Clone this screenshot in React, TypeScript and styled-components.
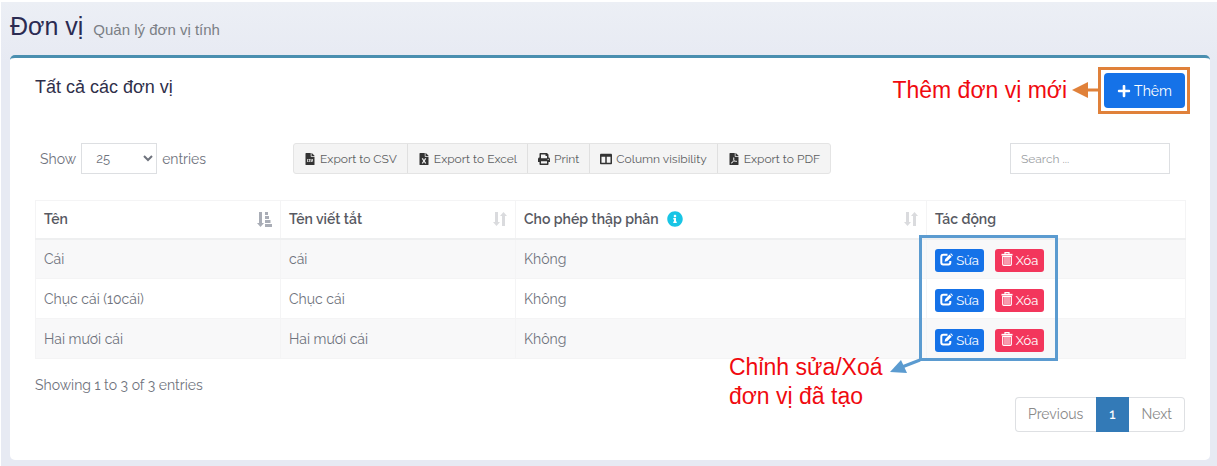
import React from "react";
import styled, { createGlobalStyle } from "styled-components";
import {
  FaColumns,
  FaFileCsv,
  FaFileExcel,
  FaFilePdf,
  FaInfoCircle,
  FaPlus,
  FaPrint,
} from "react-icons/fa";

const uiFont = `Raleway, Lato, "Noto Sans", sans-serif`;
const headingFont = `"Liberation Sans", Arial, sans-serif`;

const GlobalStyle = createGlobalStyle`
  * { box-sizing: border-box; }
  body {
    margin: 0;
    background: #e8ebf3;
    color: #6f737d;
    font: 400 14px/20px ${uiFont};
  }
  button, input, select { font-family: inherit; color: inherit; }
`;

const Page = styled.main`
  padding: 11px 7px 6px 9px;
  border-top: 2px solid #fff;
  border-left: 1px solid #fff;
  background: linear-gradient(#eceff5, #e7eaf3 60px);
`;

const PageHeader = styled.h1`
  display: flex;
  align-items: baseline;
  gap: 10px;
  margin: 0 0 12px;
  color: #2b2b52;
  font: 400 25px/26px ${headingFont};
`;

const Subtitle = styled.small`
  color: #7b7f85;
  font-size: 15px;
`;

const Card = styled.section`
  padding: 15px 25px 28px;
  border-top: 3px solid #4a8fb0;
  border-radius: 5px;
  background: #fff;
`;

const CardHeader = styled.header`
  display: flex;
  justify-content: space-between;
  align-items: flex-start;
`;

const CardTitle = styled.h2`
  margin: 4px 0 0;
  color: #2f2f4a;
  font: 400 18px/20px ${headingFont};
`;

const AddArea = styled.div`
  position: relative;
`;

const AddButton = styled.button`
  display: flex;
  align-items: center;
  justify-content: center;
  gap: 3px;
  width: 81px;
  height: 35px;
  padding: 0;
  border: 0;
  border-radius: 4px;
  background: #1572e8;
  color: #fff;
  font-size: 14px;
`;

const AddFrame = styled.div`
  position: absolute;
  inset: -6px -5px -6px -6px;
  border: 3px solid #e0813a;
  pointer-events: none;
`;

const AddNote = styled.div`
  position: absolute;
  right: 85px;
  top: 3px;
  display: flex;
  align-items: center;
  gap: 5px;
  color: #f00a10;
  font: 400 23px/28px ${headingFont};
  white-space: nowrap;
`;

const Tools = styled.div`
  display: grid;
  grid-template-columns: 2fr 7fr 3fr;
  align-items: center;
  margin: 35px 0 26px;
`;

const LengthLabel = styled.label`
  display: flex;
  align-items: center;
  gap: 5px;
  padding-left: 5px;
`;

const LengthSelect = styled.select`
  width: 76px;
  height: 31px;
  padding: 4px 0 4px 10px;
  border: 1px solid #dddfe2;
  background: #fff;
  font-size: 13px;
`;

const ExportGroup = styled.div`
  display: flex;
  justify-self: center;
  border: 1px solid #e4e4e4;
  border-radius: 3px;
  background: #f4f4f4;
`;

const ExportButton = styled.button`
  display: flex;
  align-items: center;
  gap: 4px;
  height: 29px;
  padding: 0 10px;
  border: 0;
  background: none;
  color: #5d5f62;
  font-size: 12px;
  white-space: nowrap;

  & + & { border-left: 1px solid #e0e0e0; }
  svg { color: #333; }
`;

const SearchInput = styled.input`
  justify-self: end;
  width: 160px;
  height: 31px;
  margin-right: 15px;
  padding: 0 10px;
  border: 1px solid #dddfe2;
  font-size: 12px;

  &::placeholder { color: #9b9ea3; }
`;

const Table = styled.table`
  width: 100%;
  table-layout: fixed;
  border-collapse: collapse;
`;

const Col = styled.col<{ $width: number }>`
  width: ${(p) => p.$width}px;
`;

const Row = styled.tr`
  height: 40px;
  &:nth-child(odd) { background: #f8f8f9; }
`;

const Cell = styled.td`
  padding: 0 8px;
  border: 1px solid #f4f4f5;
`;

const HeadCell = styled.th`
  height: 38px;
  padding: 0 8px;
  border: 1px solid #f4f4f5;
  border-bottom: 2px solid #eeeff0;
  color: #575962;
  font-weight: 600;
  text-align: left;
`;

const HeadContent = styled.div`
  display: flex;
  align-items: center;
  gap: 8px;
`;

const SortIcon = styled.svg<{ $active?: boolean }>`
  margin-left: auto;
  color: ${(p) => (p.$active ? "#a9adb6" : "#dadbde")};
`;

const Actions = styled.div`
  position: relative;
  display: flex;
  gap: 11px;
  padding-top: 3px;
`;

const ActionButton = styled.button<{ $danger?: boolean }>`
  display: flex;
  align-items: center;
  justify-content: center;
  gap: 3px;
  width: 49px;
  height: 23px;
  padding: 0;
  border: 0;
  border-radius: 3px;
  background: ${(p) => (p.$danger ? "#f3365c" : "#1572e8")};
  color: #fff;
  font-size: 13px;

  svg { margin-bottom: 2px; }
`;

const ActionsFrame = styled.div`
  position: absolute;
  left: -16px;
  top: -11px;
  width: 139px;
  height: 126px;
  border: 3px solid #5b9bd0;
  pointer-events: none;
`;

const ActionsNote = styled.p`
  position: absolute;
  right: 100%;
  top: 107px;
  margin: 0 32px 0 0;
  width: 174px;
  color: #f00a10;
  font: 400 23px/29px ${headingFont};
  white-space: nowrap;
`;

const NoteArrow = styled.svg`
  position: absolute;
  left: -45px;
  top: 110px;
`;

const Footer = styled.footer`
  display: flex;
  justify-content: space-between;
  align-items: flex-start;
  padding-top: 16px;
`;

const Pagination = styled.nav`
  display: flex;
  margin-top: 22px;
  border-radius: 4px;
  box-shadow: inset 0 0 0 1px #dee0e3;
`;

const PageLink = styled.a<{ $current?: boolean }>`
  padding: 7px 13px 8px;
  background: ${(p) => (p.$current ? "#337ab7" : "none")};
  color: ${(p) => (p.$current ? "#fff" : "#8a8a8a")};
  font-weight: ${(p) => (p.$current ? 500 : 400)};
  text-decoration: none;
`;

const SortBoth = () => (
  <SortIcon width="14" height="14" viewBox="0 0 14 14" fill="currentColor" aria-hidden="true">
    <path d="M2 0h3v10h2L3.500 14 0 10h2z" />
    <path d="M9 14V4H7l3.500-4L14 4h-2v10z" />
  </SortIcon>
);

const SortAscending = () => (
  <SortIcon $active width="15" height="15" viewBox="0 0 15 15" fill="currentColor" aria-hidden="true">
    <path d="M2 0h3v11h2l-3.500 4L0 11h2z" />
    <path d="M8 0h3v3H8zM8 4h4v3H8zM8 8h5.500v3H8zM8 12h7v3H8z" />
  </SortIcon>
);

const EditIcon = () => (
  <svg width="13" height="13" viewBox="0 0 13 13" aria-hidden="true">
    <path
      d="M7.500 1.800H3.200Q1.300 1.800 1.300 3.700V9.600Q1.300 11.500 3.200 11.500H8.400Q10.300 11.500 10.300 9.600V8"
      fill="none"
      stroke="currentColor"
      strokeWidth="2"
    />
    <path d="M4.600 8.700 5.200 6 9.600 1.600 11.700 3.700 7.300 8.100zM10.200 1 11 .2 13 2.200 12.300 3z" fill="currentColor" />
  </svg>
);

const TrashIcon = () => (
  <svg width="12" height="14" viewBox="0 0 12 14" fill="none" stroke="currentColor" aria-hidden="true">
    <path d="M4 2V.7h4V2" strokeWidth="1.200" />
    <path d="M.5 2.700h11" strokeWidth="1.700" />
    <path d="M1.700 4.500V12.300Q1.700 13.300 2.700 13.300H9.300Q10.300 13.300 10.300 12.300V4.500z" strokeWidth="1.200" />
    <path d="M4 5v7.500M6 5v7.500M8 5v7.500" />
  </svg>
);

const exportActions = [
  { label: "Export to CSV", Icon: FaFileCsv },
  { label: "Export to Excel", Icon: FaFileExcel },
  { label: "Print", Icon: FaPrint },
  { label: "Column visibility", Icon: FaColumns },
  { label: "Export to PDF", Icon: FaFilePdf },
];

const units = [
  { name: "Cái", short: "cái", decimal: "Không" },
  { name: "Chục cái (10cái)", short: "Chục cái", decimal: "Không" },
  { name: "Hai mươi cái", short: "Hai mươi cái", decimal: "Không" },
];

export default function App() {
  return (
    <>
      <GlobalStyle />
      <Page>
        <PageHeader>
          Đơn vị <Subtitle>Quản lý đơn vị tính</Subtitle>
        </PageHeader>
        <Card>
          <CardHeader>
            <CardTitle>Tất cả các đơn vị</CardTitle>
            <AddArea>
              <AddButton type="button">
                <FaPlus size={14} />
                Thêm
              </AddButton>
              <AddFrame />
              <AddNote>
                Thêm đơn vị mới
                <svg width="28" height="16" viewBox="0 0 28 16" fill="#e0813a" aria-hidden="true">
                  <path d="M0 8 16 0V6.500H28V9.500H16V16z" />
                </svg>
              </AddNote>
            </AddArea>
          </CardHeader>

          <Tools>
            <LengthLabel>
              Show
              <LengthSelect defaultValue="25">
                <option>25</option>
                <option>50</option>
                <option>100</option>
              </LengthSelect>
              entries
            </LengthLabel>
            <ExportGroup>
              {exportActions.map(({ label, Icon }) => (
                <ExportButton key={label} type="button">
                  <Icon size={12} />
                  {label}
                </ExportButton>
              ))}
            </ExportGroup>
            <SearchInput type="search" placeholder="Search ..." aria-label="Search" />
          </Tools>

          <Table>
            <colgroup>
              <Col $width={245} />
              <Col $width={235} />
              <Col $width={411} />
              <Col $width={259} />
            </colgroup>
            <thead>
              <tr>
                <HeadCell>
                  <HeadContent>Tên <SortAscending /></HeadContent>
                </HeadCell>
                <HeadCell>
                  <HeadContent>Tên viết tắt <SortBoth /></HeadContent>
                </HeadCell>
                <HeadCell>
                  <HeadContent>
                    Cho phép thập phân <FaInfoCircle size={16} color="#19c5e5" />
                    <SortBoth />
                  </HeadContent>
                </HeadCell>
                <HeadCell>Tác động</HeadCell>
              </tr>
            </thead>
            <tbody>
              {units.map((unit, index) => (
                <Row key={unit.name}>
                  <Cell>{unit.name}</Cell>
                  <Cell>{unit.short}</Cell>
                  <Cell>{unit.decimal}</Cell>
                  <Cell>
                    <Actions>
                      <ActionButton type="button"><EditIcon />Sửa</ActionButton>
                      <ActionButton type="button" $danger><TrashIcon />Xóa</ActionButton>
                      {index === 0 && (
                        <>
                          <ActionsFrame />
                          <NoteArrow width="32" height="20" viewBox="0 0 32 20" aria-hidden="true">
                            <path d="M30 4 12 11" stroke="#5b9bd0" strokeWidth="3" />
                            <path d="M0 16 11 4 17 17z" fill="#5b9bd0" />
                          </NoteArrow>
                          <ActionsNote>
                            Chỉnh sửa/Xoá
                            <br />
                            đơn vị đã tạo
                          </ActionsNote>
                        </>
                      )}
                    </Actions>
                  </Cell>
                </Row>
              ))}
            </tbody>
          </Table>

          <Footer>
            <span>Showing 1 to 3 of 3 entries</span>
            <Pagination aria-label="Pagination">
              <PageLink href="#previous">Previous</PageLink>
              <PageLink href="#1" $current aria-current="page">1</PageLink>
              <PageLink href="#next">Next</PageLink>
            </Pagination>
          </Footer>
        </Card>
      </Page>
    </>
  );
}
